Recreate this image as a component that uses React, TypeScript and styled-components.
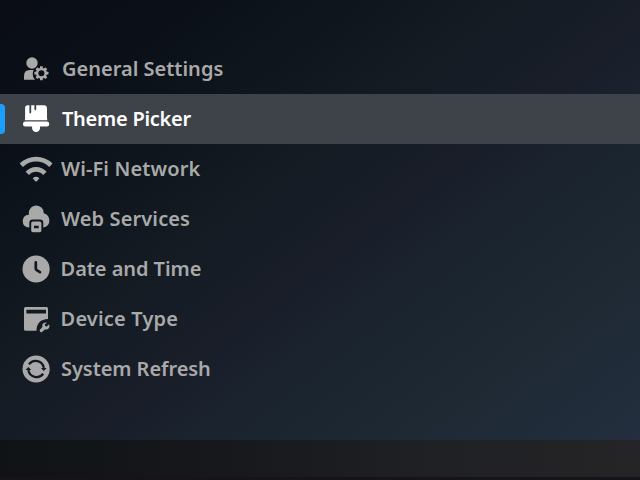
import React from 'react';
import styled, { createGlobalStyle } from 'styled-components';

const GlobalStyle = createGlobalStyle`
  * { box-sizing: border-box; }
  body { margin: 0; background: #0b0e15; overflow: hidden; }
`;

const Screen = styled.main`
  display: flex;
  flex-direction: column;
  width: 640px;
  height: 480px;
  font-family: 'Noto Sans', sans-serif;
  background: linear-gradient(to bottom right, #0a0d15 0%, #0b1018 15%, #0e151c 27%, #141b23 40%, #191e29 52%, #1b2530 65%, #1e2934 78%, #222d3c 90%, #242e3f 100%);
`;

const Menu = styled.nav`
  flex: 1;
  display: flex;
  flex-direction: column;
  padding-top: 44px;
`;

const Marker = styled.span<{ $visible: boolean }>`
  width: 5px;
  height: 30px;
  border-radius: 0 4px 4px 0;
  background: ${(p) => (p.$visible ? '#1a9fff' : 'transparent')};
`;

const Row = styled.div<{ $active: boolean }>`
  display: flex;
  align-items: center;
  height: 50px;
  --hole: #121922;
  color: ${(p) => (p.$active ? '#ffffff' : '#a9a9a9')};
  background: ${(p) => (p.$active ? '#3e4249' : 'transparent')};
`;

const Icon = styled.svg`
  flex: none;
  width: 40px;
  height: 40px;
  margin-left: 11px;
  fill: currentColor;
`;

const Label = styled.span<{ $indent: number; $spacing: number }>`
  margin-left: ${(p) => p.$indent}px;
  font-size: 20px;
  line-height: 28px;
  font-weight: 600;
  white-space: nowrap;
  letter-spacing: ${(p) => p.$spacing}px;
`;

const Footer = styled.footer`
  height: 40px;
  border-bottom: 3px solid #17131a;
  background: linear-gradient(to right, #0f1315, #17181b 35%, #1f2023 65%, #252528);
`;

const teeth = [0, 45, 90, 135, 180, 225, 270, 315];

const GeneralIcon = () => (
  <Icon viewBox="0 0 40 40">
    <ellipse cx="16" cy="14" rx="5.7" ry="5.7" />
    <path d="M8 30.8V27.2Q8 21 13.6 21H17.6Q16 24.4 17 27.4Q17.8 29.4 19.2 30.8Z" />
    <circle cx="25.4" cy="24.2" r="4.3" fill="none" stroke="currentColor" strokeWidth="2.5" />
    {teeth.map((a) => (
      <rect key={a} x="24" y="17.2" width="2.8" height="2.6" rx=".4" transform={`rotate(${a} 25.4 24.2)`} />
    ))}
  </Icon>
);

const ThemeIcon = () => (
  <Icon viewBox="0 0 40 40">
    <path d="M12 6.3H13.4V13.6Q14.3 15.3 15.2 13.6V6.3H18.4V10.6Q19.3 12.2 20.2 10.6V6.3H28.4Q31 6.5 31 9V18.5Q31.1 20.4 31.4 21.2H8.8Q9.1 20.4 9.1 18.5V9Q9.1 6.5 12 6.3Z" />
    <rect x="7" y="22.6" width="26.2" height="5" rx="2.3" />
    <path d="M16.1 27H24V29.2Q23.4 33 20 33Q16.8 33 16.1 29.2Z" />
  </Icon>
);

const WifiIcon = () => (
  <Icon viewBox="0 0 40 40">
    <g fill="none" stroke="currentColor" strokeWidth="4.7">
      <path d="M5.3 16.3Q11.7 10.2 20.1 10.2T34.9 16.3" />
      <path d="M11.3 24.4Q15 20.3 20.1 20.3T28.9 24.4" />
    </g>
    <path d="M16.7 29.2Q20.1 26.5 23.4 29.2L20.9 32.2Q20.1 32.8 19.3 32.2Z" />
  </Icon>
);

const WebIcon = () => (
  <Icon viewBox="0 0 40 40">
    <path d="M12.8 13.8A7.5 7.5 0 1 1 27.8 14.2Q33.3 15.7 33.4 21.7Q33.2 27.8 27.3 28.4V23.7Q27.2 20.6 24 20.5H16.7Q13.4 20.6 13.3 23.7V28.4Q6.8 28.2 6.7 22Q7 16.2 12.8 15.7Z" />
    <path fillRule="evenodd" d="M17 22.4H23.7Q25.4 22.4 25.4 24.1V31.5Q25.4 33.2 23.7 33.2H17Q15.2 33.2 15.2 31.5V24.1Q15.2 22.4 17 22.4ZM18 26.8V29.2H22.7V26.8Z" />
  </Icon>
);

const ClockIcon = () => (
  <Icon viewBox="0 0 40 40">
    <circle cx="20.1" cy="20" r="13.6" />
    <path d="M19.8 13.3V19.8Q19.9 20.6 20.7 21.1L24 23.2" fill="none" stroke="var(--hole)" strokeWidth="2.7" strokeLinecap="round" />
  </Icon>
);

const DeviceIcon = () => (
  <Icon viewBox="0 0 40 40">
    <path fillRule="evenodd" d="M9.6 8.1H30.6Q32 8.1 32 9.6V20Q26.4 20.2 23.4 23.2Q20.4 26.2 20.5 31.8H9.6Q8 31.8 8 30.2V9.6Q8 8.1 9.6 8.1ZM10.4 10.7V14.6H30V10.7Z" />
    <path d="M33.1 25.3L30.8 27.5L29.1 27L28.7 25.5L30.9 23.7Q28 22.9 26.6 25.1Q25.9 26.6 26.4 28L23.7 31Q23.4 33.4 25.8 33.2L28.8 30.4Q31.5 31.1 33 29Q34 27.4 33.1 25.3Z" />
  </Icon>
);

const RefreshIcon = () => (
  <Icon viewBox="0 0 40 40">
    <circle cx="20.1" cy="20" r="13.6" />
    <g fill="none" stroke="var(--hole)" strokeWidth="2.3">
      <path d="M13 15.2A8.3 8.3 0 0 1 27.8 18.9" />
      <path d="M27.2 24.8A8.3 8.3 0 0 1 12.4 21.1" />
    </g>
    <g fill="var(--hole)">
      <path d="M24.9 19H30.6L27.8 22Z" />
      <path d="M9.6 21H15.3L12.4 18Z" />
    </g>
  </Icon>
);

const items = [
  { label: 'General Settings', icon: <GeneralIcon />, indent: 6, spacing: 0 },
  { label: 'Theme Picker', icon: <ThemeIcon />, indent: 6, spacing: -0.26 },
  { label: 'Wi-Fi Network', icon: <WifiIcon />, indent: 5, spacing: 0.12 },
  { label: 'Web Services', icon: <WebIcon />, indent: 5, spacing: 0.12 },
  { label: 'Date and Time', icon: <ClockIcon />, indent: 4.6, spacing: -0.06 },
  { label: 'Device Type', icon: <DeviceIcon />, indent: 4.6, spacing: 0.17 },
  { label: 'System Refresh', icon: <RefreshIcon />, indent: 5, spacing: -0.06 },
];

export default function App() {
  return (
    <Screen>
      <GlobalStyle />
      <Menu>
        {items.map((item, i) => (
          <Row key={item.label} $active={i === 1}>
            <Marker $visible={i === 1} />
            {item.icon}
            <Label $indent={item.indent} $spacing={item.spacing}>{item.label}</Label>
          </Row>
        ))}
      </Menu>
      <Footer />
    </Screen>
  );
}
